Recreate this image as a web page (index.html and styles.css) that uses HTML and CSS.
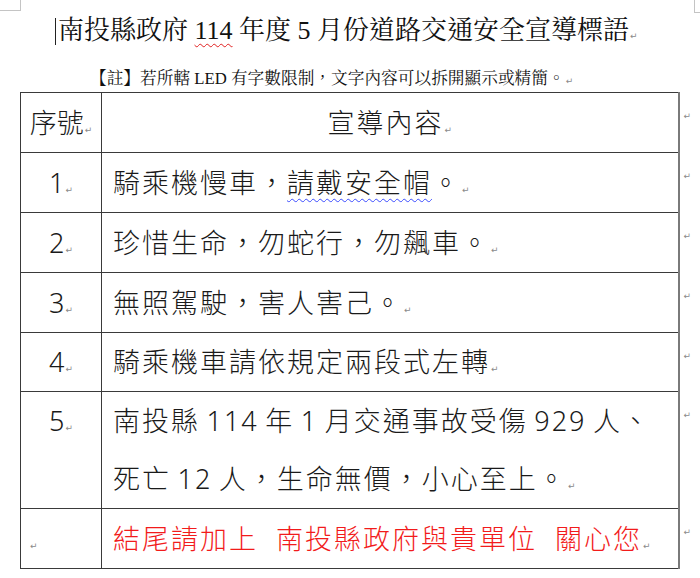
FILE: index.html
```html
<!DOCTYPE html>
<html lang="zh-TW">
<head>
<meta charset="utf-8">
<link rel="stylesheet" href="styles.css">
</head>
<body>
<div class="page">
  <span class="corner tl"></span><span class="corner tr"></span>
  <h1 class="title"><span class="cursor"></span>南投縣政府 <span class="spell-red">114</span> 年度 5 月份道路交通安全宣導標語<span class="pm">↵</span></h1>
  <p class="note">【註】若所轄 LED 有字數限制，文字內容可以拆開顯示或精簡。<span class="pm">↵</span></p>
  <table class="slogans">
    <colgroup><col class="c-num"><col class="c-txt"><col class="c-rm"></colgroup>
    <tr>
      <td class="num">序號<span class="pm">↵</span></td>
      <td class="txt head">宣導內容<span class="pm">↵</span></td>
      <td class="rm"><span class="pm">↵</span></td>
    </tr>
    <tr>
      <td class="num">1<span class="pm">↵</span></td>
      <td class="txt">騎乘機慢車，<span class="spell-blue">請戴安全帽</span>。<span class="pm">↵</span></td>
      <td class="rm"><span class="pm">↵</span></td>
    </tr>
    <tr>
      <td class="num">2<span class="pm">↵</span></td>
      <td class="txt">珍惜生命，勿蛇行，勿飆車。<span class="pm">↵</span></td>
      <td class="rm"><span class="pm">↵</span></td>
    </tr>
    <tr>
      <td class="num">3<span class="pm">↵</span></td>
      <td class="txt">無照駕駛，害人害己。<span class="pm">↵</span></td>
      <td class="rm"><span class="pm">↵</span></td>
    </tr>
    <tr class="short">
      <td class="num">4<span class="pm">↵</span></td>
      <td class="txt">騎乘機車請依規定兩段式左轉<span class="pm">↵</span></td>
      <td class="rm"><span class="pm">↵</span></td>
    </tr>
    <tr class="tall">
      <td class="num">5<span class="pm">↵</span></td>
      <td class="txt stats">南投縣 114 年 1 月交通事故受傷 929 人、<br>死亡 12 人，生命無價，小心至上。<span class="pm">↵</span></td>
      <td class="rm"><span class="pm">↵</span></td>
    </tr>
    <tr>
      <td class="blank"><span class="pm">↵</span></td>
      <td class="txt red">結尾請加上&nbsp; 南投縣政府與貴單位&nbsp; 關心您<span class="pm">↵</span></td>
      <td class="rm"><span class="pm">↵</span></td>
    </tr>
  </table>
</div>
</body>
</html>
```

FILE: styles.css
```css
* { box-sizing: border-box; }
html, body { margin: 0; padding: 0; background: #fff; }
body { width: 700px; height: 578px; overflow: hidden; color: #111; }
.page { position: relative; width: 700px; height: 578px; }

.corner { position: absolute; border-color: #c4c4c4; border-style: solid; }
.corner.tl { left: 0; top: 0; width: 21px; height: 11px; border-width: 0 1px 1px 0; }
.corner.tr { left: 694px; top: 0; width: 6px; height: 13px; border-width: 0 0 1px 1px; }

.title {
  margin: 0;
  height: 55px;
  padding: 15px 0 0 55px;
  font: 400 26px/32px "Liberation Serif", "Noto Serif CJK TC", "Noto Sans CJK TC", serif;
  white-space: nowrap;
  color: #111;
}
.cursor {
  display: inline-block;
  width: 1px;
  height: 27px;
  background: #222;
  vertical-align: -6px;
  margin-right: 2px;
}
.spell-red { text-decoration: underline wavy #e02020; text-decoration-thickness: 1px; text-underline-offset: 4px; }
.spell-blue { text-decoration: underline wavy #3b4cff; text-decoration-thickness: 1px; text-underline-offset: 5px; }

.pm {
  font-family: "DejaVu Sans", sans-serif;
  font-size: 9px;
  line-height: 1;
  font-weight: 400;
  letter-spacing: 0;
  word-spacing: 0;
  color: #8a8a8a;
  margin-left: 1px;
}

.note {
  margin: 0;
  height: 37px;
  padding: 14px 0 0 90px;
  font: 400 16.7px/20px "Liberation Serif", "Noto Serif CJK TC", "Noto Sans CJK TC", serif;
  white-space: nowrap;
}

.slogans {
  margin-left: 20px;
  border-collapse: collapse;
  table-layout: fixed;
  width: 680px;
  font: 300 27px/58px "Noto Sans", "Noto Sans CJK TC", sans-serif;
  letter-spacing: 2px;
  color: #1a1a1a;
}
.c-num { width: 81px; }
.c-txt { width: 577px; }
.c-rm { width: 22px; }

.slogans tr { height: 60px; }
.slogans tr.short { height: 58px; }
.slogans td { padding: 0; }
.slogans td.num, .slogans td.txt, .slogans td.blank {
  border: 1px solid #3a3a3a;
  vertical-align: middle;
  white-space: nowrap;
  overflow: hidden;
}
.slogans td.txt { border-right: 2px solid #7a7a7a; padding-left: 11px; }
.slogans td.num { text-align: center; padding-left: 0; letter-spacing: 0; }
.slogans td.blank { padding-left: 8px; }
.slogans td.head { text-align: center; padding-left: 0; }
.slogans td.stats { word-spacing: -2.5px; }
.slogans tr.tall td.num { vertical-align: top; }
.slogans td.red { color: #f21b1b; }
.slogans td.rm {
  border: none;
  vertical-align: top;
  padding: 8px 0 0 3px;
  line-height: 16px;
}
```
